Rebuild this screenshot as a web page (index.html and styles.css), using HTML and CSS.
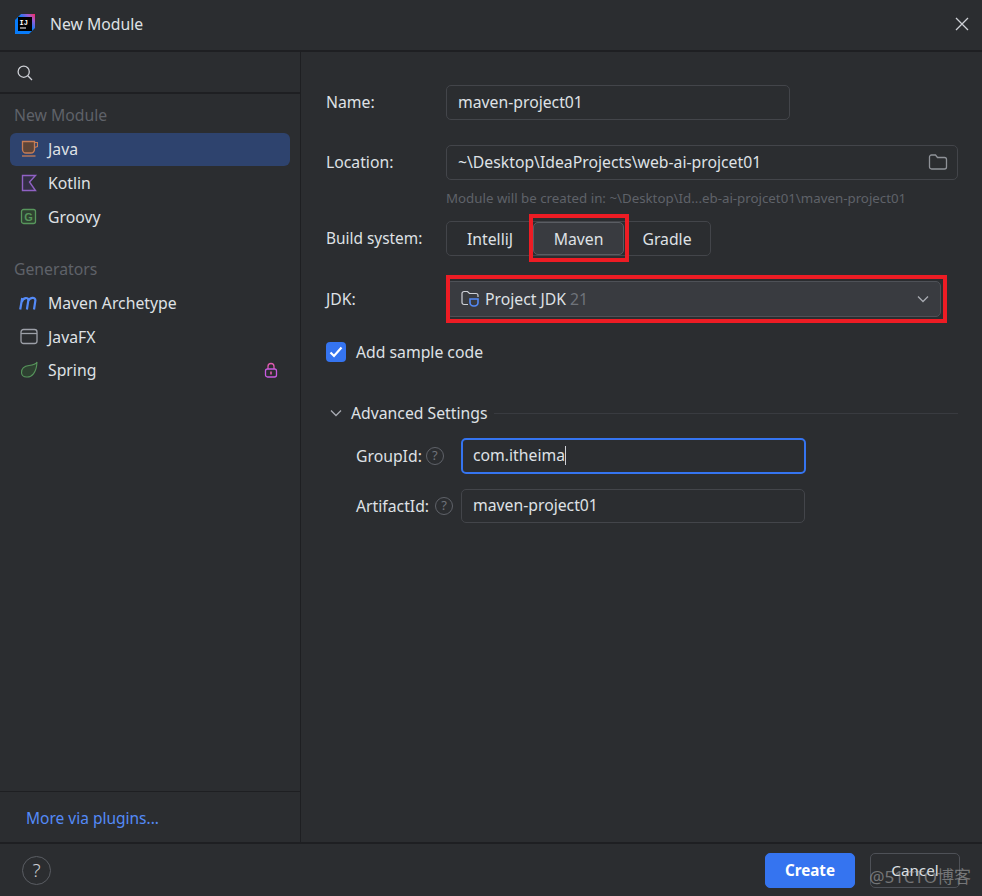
FILE: index.html
```html
<!DOCTYPE html>
<html lang="en">
<head>
<meta charset="utf-8">
<title>New Module</title>
<link rel="stylesheet" href="styles.css">
</head>
<body>
<div class="dialog">
  <header class="titlebar">
    <svg class="logo" width="22" height="22" viewBox="0 0 22 22">
      <defs>
        <linearGradient id="lg" x1="0" y1="1" x2="1" y2="0">
          <stop offset="0" stop-color="#087cfa"/><stop offset=".55" stop-color="#087cfa"/><stop offset=".8" stop-color="#9c5bd0"/><stop offset="1" stop-color="#fe2857"/>
        </linearGradient>
      </defs>
      <path d="M1 7 7 1h14v14l-6 6H1z" fill="url(#lg)"/>
      <rect x="4" y="4" width="14" height="14" fill="#000"/>
      <rect x="6" y="14.5" width="6" height="1" fill="#fff"/>
      <text x="5.5" y="11.5" class="logo-text">IJ</text>
    </svg>
    <span class="title">New Module</span>
    <svg class="close" width="14" height="14" viewBox="0 0 14 14"><path d="M1 1l12 12M13 1 1 13" stroke="#ced0d6" stroke-width="1.3" fill="none"/></svg>
  </header>
  <div class="main">
    <aside class="sidebar">
      <div class="search">
        <svg width="18" height="18" viewBox="0 0 18 18"><circle cx="7.7" cy="7.7" r="5.6" fill="none" stroke="#ced0d6" stroke-width="1.3"/><path d="M11.8 11.8 16 16" stroke="#ced0d6" stroke-width="1.3"/></svg>
      </div>
      <div class="list">
        <div class="group first">New Module</div>
        <div class="item selected">
          <svg class="ico" width="18" height="18" viewBox="0 0 18 18"><path d="M2.500 1.500h12v8a3.500 3.500 0 0 1-3.500 3.500H6a3.500 3.500 0 0 1-3.500-3.500z" fill="#5e4538" stroke="#c77d55" stroke-width="1.300"/><path d="M14.500 2.500H17.500V6.500L14.500 7.500" fill="none" stroke="#c77d55" stroke-width="1.200"/><path d="M2 16h13.500" stroke="#c77d55" stroke-width="1.300"/></svg>
          <span>Java</span>
        </div>
        <div class="item">
          <svg class="ico" width="18" height="18" viewBox="0 0 18 18"><path d="M2.500 1.500H15.500L9.500 8l6 8.500h-13z" fill="#332f45" stroke="#9062c4" stroke-width="1.400"/></svg>
          <span>Kotlin</span>
        </div>
        <div class="item">
          <svg class="ico" width="18" height="18" viewBox="0 0 18 18"><rect x="1.500" y="1.500" width="14" height="14" rx="2" fill="#2e4131" stroke="#57965c" stroke-width="1.300"/><text x="8.500" y="12.500" class="g-text">G</text></svg>
          <span>Groovy</span>
        </div>
        <div class="group">Generators</div>
        <div class="item">
          <svg class="ico mvn" width="20" height="18" viewBox="0 0 20 18"><path d="M1.200 15.500 3.200 4M2.800 8C4 3.500 9.500 2.500 9.300 6.500L7.900 15.500M9.300 7C10.500 3.500 16.500 2.500 16.400 6.500L15 15.500" fill="none" stroke="#548af7" stroke-width="2.200"/></svg>
          <span>Maven Archetype</span>
        </div>
        <div class="item">
          <svg class="ico" width="18" height="18" viewBox="0 0 18 18"><rect x="1" y="1.500" width="16" height="14" rx="2.500" fill="none" stroke="#9da0a8" stroke-width="1.300"/><path d="M1 5.500h16" stroke="#9da0a8" stroke-width="1.300"/></svg>
          <span>JavaFX</span>
        </div>
        <div class="item spring">
          <svg class="ico" width="18" height="18" viewBox="0 0 18 18"><path d="M17 1c-1 2-3 3-8 3.500C4 5 1 8 1.500 12c.3 2 2 4 5 4 5 .5 10-4 10.500-15z" fill="#2e4131" stroke="#57965c" stroke-width="1.100"/></svg>
          <span>Spring</span>
          <svg class="lock" width="14" height="16" viewBox="0 0 14 16"><path d="M4 7V4.500a3 3 0 0 1 6 0V7" fill="none" stroke="#e05bb0" stroke-width="1.300"/><rect x="1.500" y="7" width="11" height="8" rx="2" fill="none" stroke="#c75be0" stroke-width="1.300"/><rect x="6.200" y="9.500" width="1.600" height="3" fill="#e05bb0"/></svg>
        </div>
      </div>
      <div class="plugins"><a class="link">More via plugins...</a></div>
    </aside>
    <section class="content">
      <div class="row row-name">
        <label class="lbl">Name:</label>
        <div class="field w-name">maven-project01</div>
      </div>
      <div class="row row-location">
        <label class="lbl">Location:</label>
        <div class="field w-full">
          <span>~\Desktop\IdeaProjects\web-ai-projcet01</span>
          <svg class="folder" width="20" height="18" viewBox="0 0 20 18"><path d="M1.500 4a2 2 0 0 1 2-2h4l2 2.500h7a2 2 0 0 1 2 2V14a2 2 0 0 1-2 2h-13a2 2 0 0 1-2-2z" fill="none" stroke="#8f9298" stroke-width="1.300"/></svg>
        </div>
      </div>
      <div class="hint">Module will be created in: ~\Desktop\Id...eb-ai-projcet01\maven-project01</div>
      <div class="row row-build">
        <label class="lbl">Build system:</label>
        <div class="segment">
          <div class="seg seg-idea">IntelliJ</div>
          <div class="seg seg-active">Maven<span class="mark mark-maven"></span></div>
          <div class="seg seg-gradle">Gradle</div>
        </div>
      </div>
      <div class="row row-jdk">
        <label class="lbl">JDK:</label>
        <div class="combo">
          <svg class="jdk-ico" width="20" height="18" viewBox="0 0 20 18"><path d="M7 14.500H3a2 2 0 0 1-2-2V3.500a2 2 0 0 1 2-2h3.500l2 2H15a2 2 0 0 1 2 2V7" fill="none" stroke="#ced0d6" stroke-width="1.200"/><path d="M9 9h8v3.500a3.500 3.500 0 0 1-3.500 3.500h-1A3.500 3.500 0 0 1 9 12.500z" fill="none" stroke="#548af7" stroke-width="1.600"/></svg>
          <span>Project JDK</span>
          <span class="dim">21</span>
          <svg class="chev" width="12" height="8" viewBox="0 0 12 8"><path d="M1 1.500l5 5 5-5" fill="none" stroke="#a8abb2" stroke-width="1.300"/></svg>
          <span class="mark mark-jdk"></span>
        </div>
      </div>
      <div class="check-row">
        <span class="checkbox"><svg width="14" height="12" viewBox="0 0 14 12"><path d="M1.500 6.500 5 10l7.500-8.500" fill="none" stroke="#fff" stroke-width="2.200"/></svg></span>
        <span>Add sample code</span>
      </div>
      <div class="advanced">
        <svg width="12" height="8" viewBox="0 0 12 8"><path d="M1 1.500l5 5 5-5" fill="none" stroke="#a8abb2" stroke-width="1.300"/></svg>
        <span>Advanced Settings</span>
        <span class="rule"></span>
      </div>
      <div class="row row-group">
        <label class="lbl2 tight">GroupId: <span class="q">?</span></label>
        <div class="field w-adv focus">com.itheima<span class="caret"></span></div>
      </div>
      <div class="row row-artifact">
        <label class="lbl2">ArtifactId: <span class="q">?</span></label>
        <div class="field w-adv2">maven-project01</div>
      </div>
    </section>
  </div>
  <footer class="footer">
    <span class="help">?</span>
    <div class="actions">
      <button class="btn primary">Create</button>
      <button class="btn">Cancel</button>
    </div>
  </footer>
  <div class="watermark">@51CTO博客</div>
</div>
</body>
</html>
```

FILE: styles.css
```css
* { box-sizing: border-box; }
html, body { margin: 0; height: 100%; }
body { background: #2b2d30; overflow: hidden; }
.dialog {
  position: relative;
  width: 982px;
  height: 896px;
  display: flex;
  flex-direction: column;
  background: #2b2d30;
  color: #dfe1e5;
  font-family: "Noto Sans", "Noto Sans CJK SC", sans-serif;
  font-size: 15.75px;
  line-height: 20px;
}
.titlebar {
  height: 52px;
  flex: none;
  display: flex;
  align-items: center;
  padding: 0 13px 2px 14px;
  border-bottom: 2px solid #1e1f22;
}
.logo { flex: none; }
.logo-text { font: bold 7px "Liberation Mono", monospace; fill: #fff; }
.title { margin-left: 14px; flex: 1; }
.main { flex: 1; display: flex; min-height: 0; }
.sidebar {
  width: 301px;
  flex: none;
  display: flex;
  flex-direction: column;
  border-right: 1px solid #1e1f22;
}
.search {
  height: 42px;
  flex: none;
  display: flex;
  align-items: center;
  padding: 2px 0 0 16px;
  border-bottom: 2px solid #1e1f22;
}
.list { flex: 1; padding: 0 10px; }
.group { color: #5f6269; height: 34px; display: flex; align-items: center; padding-left: 4px; margin-top: 18px; }
.group.first { margin: 4px 0 1px; height: 34px; }
.item {
  height: 34px;
  display: flex;
  align-items: center;
  gap: 10px;
  padding: 0 10px;
  border-radius: 6px;
}
.item.selected { background: #2e436e; height: 33px; padding-bottom: 1px; }
.item.spring { margin-top: -1px; }
.ico { flex: none; }
.mvn { margin-left: -1px; margin-right: -1px; }
.g-text { font: bold 11px "Liberation Sans", sans-serif; fill: #57965c; text-anchor: middle; }
.lock { margin-left: auto; margin-right: 2px; }
.plugins {
  height: 51px;
  flex: none;
  border-top: 1px solid #1e1f22;
  display: flex;
  align-items: center;
  padding: 2px 0 0 26px;
}
.link { color: #548af7; font-size: 15.5px; }
.content { flex: 1; padding: 33px 24px 0 25px; min-width: 0; }
.row { display: flex; align-items: center; }
.lbl { width: 120px; flex: none; padding-bottom: 1px; }
.lbl2 { flex: none; width: 105px; display: flex; align-items: center; gap: 6px; padding-bottom: 1px; }
.lbl2.tight { gap: 4px; }
.field {
  height: 35px;
  border: 1px solid #43454a;
  border-radius: 5px;
  padding: 0 11px 1px;
  display: flex;
  align-items: center;
}
.w-name { width: 344px; }
.w-full { width: 512px; justify-content: space-between; padding-right: 9px; }
.row-location { margin-top: 25px; }
.hint { color: #5f6269; font-size: 13.3px; margin: 9px 0 0 120px; height: 18px; line-height: 18px; white-space: nowrap; }
.row-build { margin-top: 14px; }
.row-build .lbl { padding-bottom: 0; font-size: 15.4px; }
.segment {
  height: 35px;
  border: 1px solid #43454a;
  border-radius: 5px;
  display: flex;
  width: 265px;
}
.seg { display: flex; align-items: center; justify-content: center; height: 33px; position: relative; }
.seg-idea { width: 86px; }
.seg-active { width: 91px; background: #393b40; border: 1px solid #5a5d63; border-radius: 5px; }
.seg-gradle { flex: 1; }
.mark { position: absolute; border: 4px solid #ed1c24; pointer-events: none; }
.mark-maven { left: -5px; top: -9px; width: 100px; height: 48px; }
.mark-jdk { left: -1px; top: -7px; width: 501px; height: 48px; }
.row-jdk { margin-top: 25px; }
.row-jdk .lbl { padding-bottom: 0; }
.combo {
  position: relative;
  width: 495px;
  height: 36px;
  background: #393b40;
  border: 1px solid #4e5157;
  border-radius: 5px;
  display: flex;
  align-items: center;
  padding: 0 11px 0 14px;
  gap: 4px;
}
.jdk-ico { flex: none; }
.dim { color: #6f737a; }
.chev { margin-left: auto; }
.check-row { display: flex; align-items: center; gap: 10px; margin-top: 25px; height: 20px; }
.checkbox {
  width: 20px; height: 20px;
  border-radius: 4px;
  background: #3574f0;
  display: flex; align-items: center; justify-content: center;
}
.advanced { display: flex; align-items: center; margin: 41px 0 0 4px; height: 20px; }
.advanced svg { margin-right: 9px; }
.rule { flex: 1; height: 1px; background: #393b40; margin-left: 7px; }
.row-group { margin-top: 15px; padding-left: 30px; }
.row-artifact { margin-top: 15px; padding-left: 30px; }
.q {
  width: 18px; height: 18px;
  flex: none;
  border: 1.500px solid #5f6269;
  border-radius: 50%;
  color: #6f737a;
  font-size: 13px;
  line-height: 15px;
  text-align: center;
  display: inline-block;
}
.w-adv { width: 345px; height: 36px; padding-bottom: 2px; }
.w-adv2 { width: 344px; height: 34px; padding-bottom: 2px; }
.focus { border: 2px solid #3574f0; padding-left: 10px; }
.caret { width: 1px; height: 19px; background: #ced0d6; }
.footer {
  height: 54px;
  flex: none;
  border-top: 2px solid #1e1f22;
  display: flex;
  align-items: center;
  justify-content: space-between;
  padding: 0 22px;
}
.help {
  width: 29px; height: 29px;
  border: 1px solid #5a5d63;
  border-radius: 50%;
  display: flex; align-items: center; justify-content: center;
  font-size: 19px;
  font-weight: 300;
  color: #ced0d6;
}
.actions { display: flex; gap: 15px; }
.btn {
  width: 90px; height: 35px;
  border-radius: 5px;
  border: 1px solid #4e5157;
  background: transparent;
  color: #dfe1e5;
  font: inherit;
  font-size: 15.2px;
}
.btn.primary { background: #3574f0; border-color: #3574f0; color: #fff; font-weight: 700; }
.watermark {
  position: absolute;
  right: 11px;
  bottom: 9px;
  color: rgba(190,190,190,.5);
  font-size: 17px;
  pointer-events: none;
}
```
